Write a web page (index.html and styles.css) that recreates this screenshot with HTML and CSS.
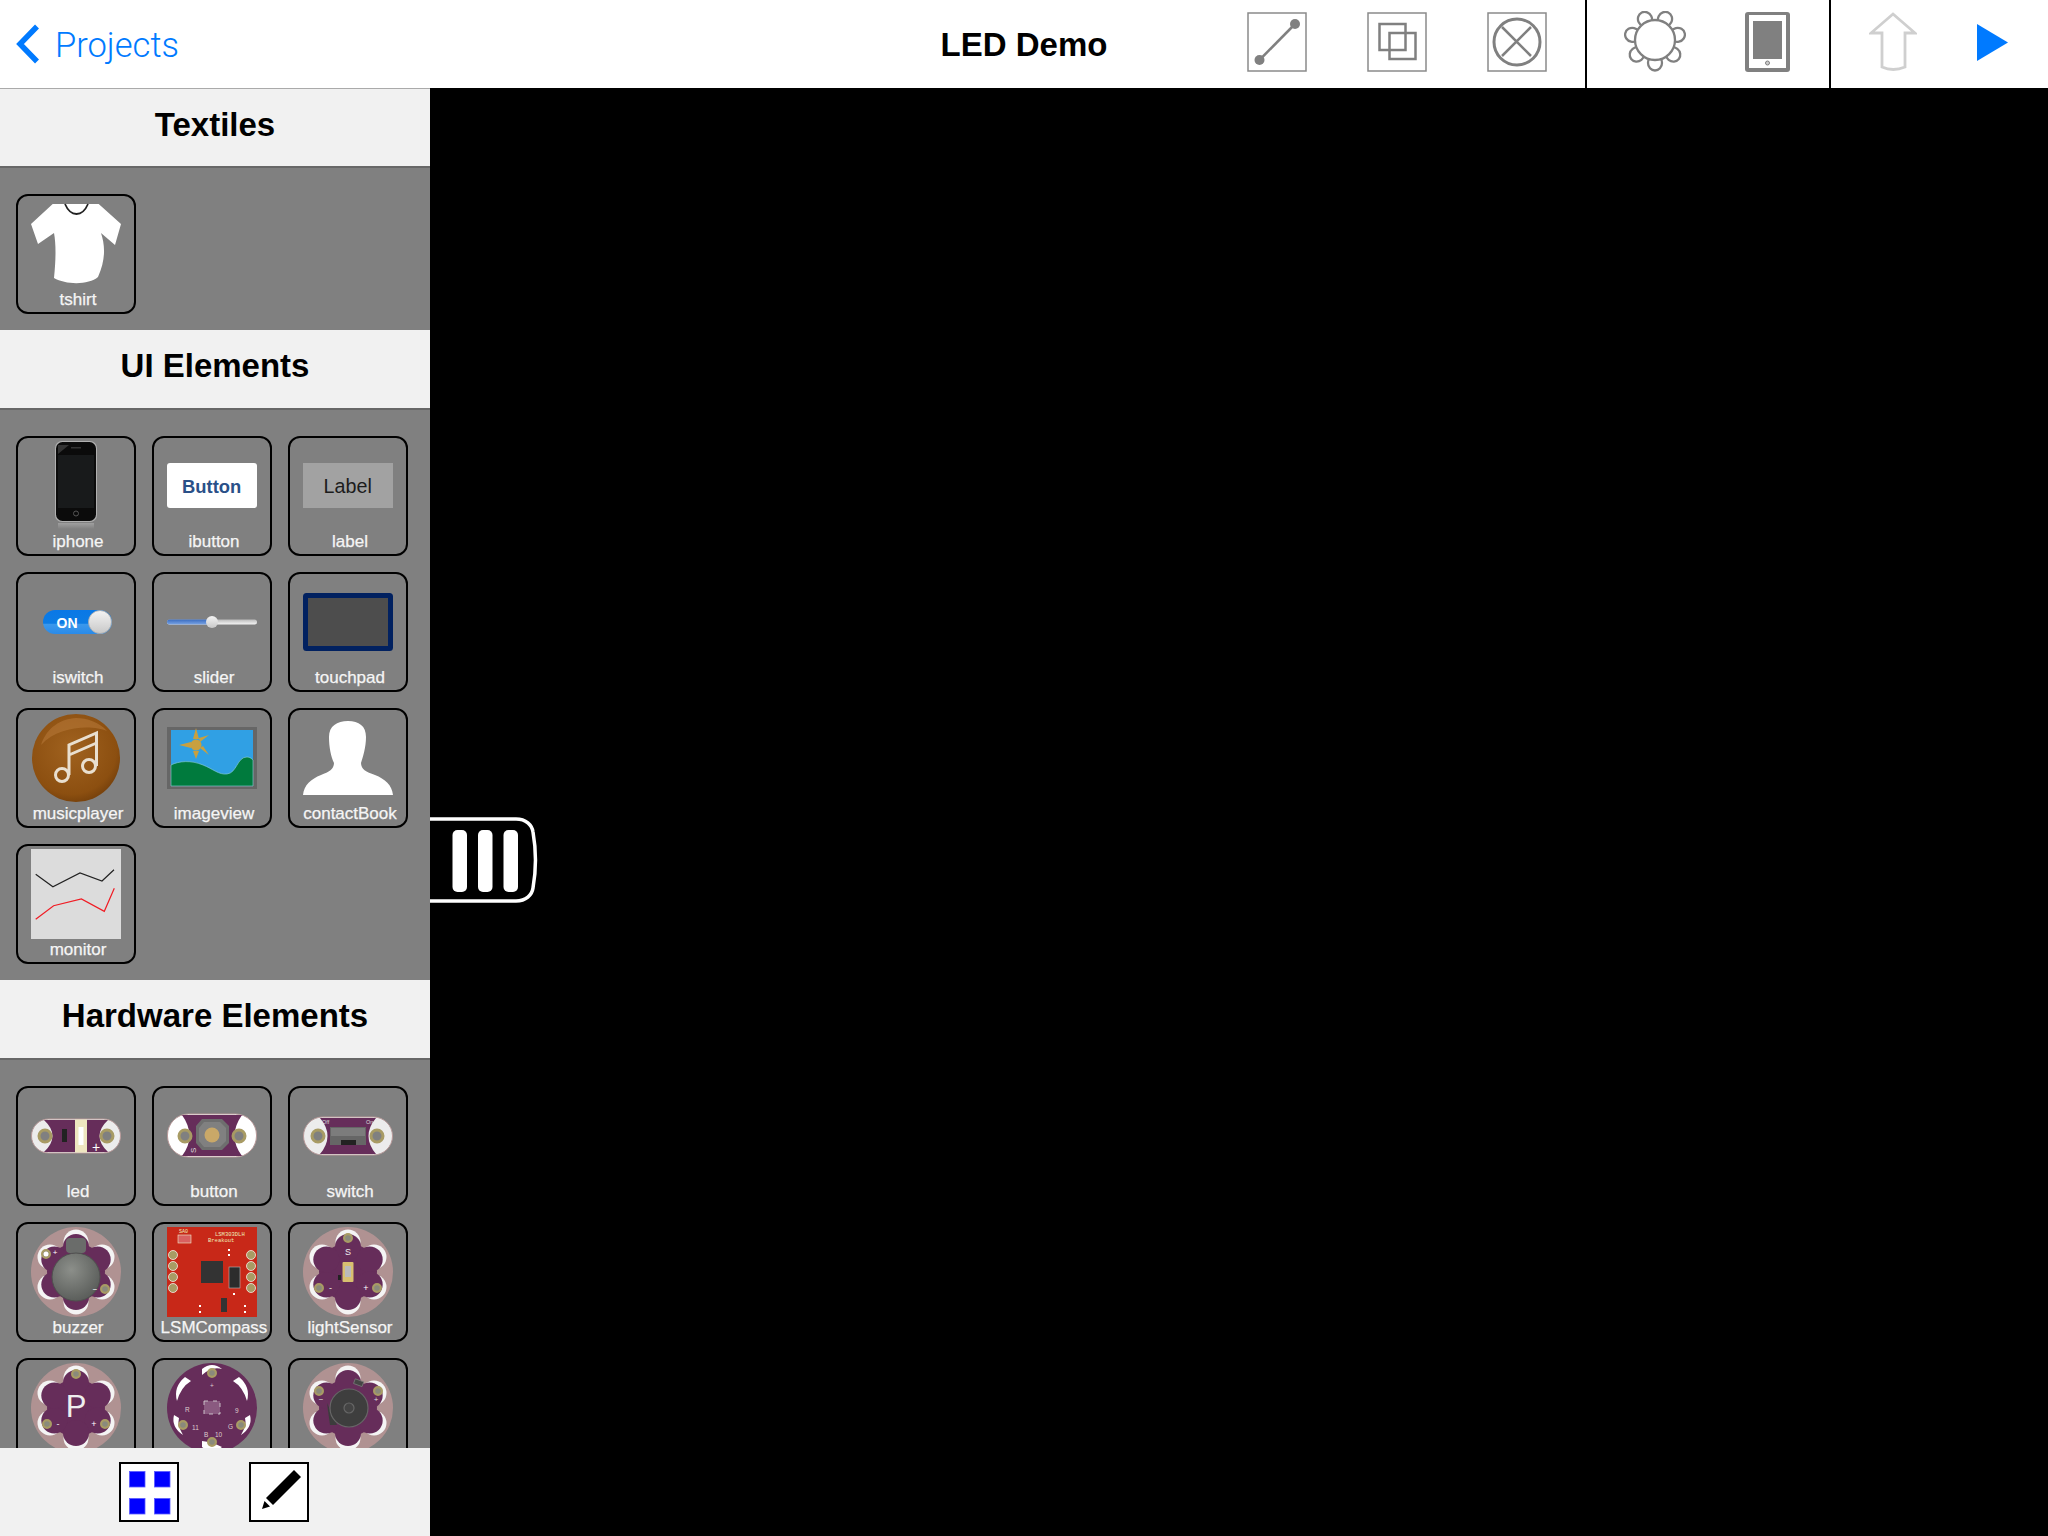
FILE: index.html
```html
<!DOCTYPE html>
<html lang="en">
<head>
<meta charset="utf-8">
<title>LED Demo</title>
<link rel="stylesheet" href="styles.css">
</head>
<body>
<svg class="svg-defs" aria-hidden="true">
  <defs>
    <clipPath id="disk"><circle cx="45" cy="45" r="45"/></clipPath>
    <radialGradient id="brown" cx="45%" cy="40%" r="60%"><stop offset="0" stop-color="#a0621f"/><stop offset="0.85" stop-color="#8c4f10"/><stop offset="1" stop-color="#7a430c"/></radialGradient>
    <radialGradient id="buzz" cx="40%" cy="35%" r="70%"><stop offset="0" stop-color="#8c8f8a"/><stop offset="1" stop-color="#585b58"/></radialGradient>
    <linearGradient id="blue" x1="0" y1="0" x2="0" y2="1"><stop offset="0" stop-color="#0a78e6"/><stop offset="0.55" stop-color="#0c7ce4"/><stop offset="0.6" stop-color="#3a98ec"/><stop offset="1" stop-color="#2a8ae8"/></linearGradient>
    <linearGradient id="knob" x1="0" y1="0" x2="0" y2="1"><stop offset="0" stop-color="#f4f4f4"/><stop offset="1" stop-color="#c8c8c8"/></linearGradient>
    <linearGradient id="track" x1="0" y1="0" x2="0" y2="1"><stop offset="0" stop-color="#3a6cc0"/><stop offset="1" stop-color="#7aa4e4"/></linearGradient>
    <linearGradient id="trackr" x1="0" y1="0" x2="0" y2="1"><stop offset="0" stop-color="#bbbbbb"/><stop offset="1" stop-color="#f4f4f4"/></linearGradient>
    <linearGradient id="fade" x1="0" y1="0" x2="0" y2="1"><stop offset="0" stop-color="#a0a0a0"/><stop offset="1" stop-color="#808080"/></linearGradient>
    <g id="flower">
      <circle cx="45" cy="45" r="45" fill="#b09292"/>
      <g clip-path="url(#disk)" fill="#f4f4f4">
        <circle cx="45" cy="15" r="12.500"/><circle cx="71" cy="30" r="12.500"/><circle cx="71" cy="60" r="12.500"/>
        <circle cx="45" cy="75" r="12.500"/><circle cx="19" cy="60" r="12.500"/><circle cx="19" cy="30" r="12.500"/>
      </g>
      <g fill="#662d5a">
        <circle cx="45" cy="45" r="29"/>
        <circle cx="45" cy="20" r="13"/><circle cx="66.700" cy="32.500" r="13"/><circle cx="66.700" cy="57.500" r="13"/>
        <circle cx="45" cy="70" r="13"/><circle cx="23.300" cy="57.500" r="13"/><circle cx="23.300" cy="32.500" r="13"/>
      </g>
    </g>
    <circle id="pad" r="3.900" fill="#8a8a7c" stroke="#a89b64" stroke-width="2.200"/>
    <circle id="padl" r="6" fill="#808080" stroke="#a89b64" stroke-width="3"/>
  </defs>
</svg>

<div class="app">
  <header class="topbar">
    <a class="back">
      <svg class="chevron" viewBox="0 0 24 40"><path d="M21 2.500 4 20l17 17.500" fill="none" stroke="#007aff" stroke-width="5.500"/></svg>
      <span>Projects</span>
    </a>
    <h1 class="title">LED Demo</h1>
    <div class="tools">
      <div class="group group-edit">
        <svg class="tool-box" viewBox="0 0 60 60"><rect x="1" y="1" width="58" height="58" fill="#fff" stroke="#8a8a8a" stroke-width="1.500"/><path d="M12.500 48 48 12" stroke="#808080" stroke-width="2.500"/><circle cx="48" cy="12" r="5" fill="#808080"/><circle cx="12.500" cy="48" r="5" fill="#808080"/></svg>
        <svg class="tool-box" viewBox="0 0 60 60"><rect x="1" y="1" width="58" height="58" fill="#fff" stroke="#8a8a8a" stroke-width="1.500"/><rect x="12.500" y="12" width="26" height="26" fill="none" stroke="#808080" stroke-width="2.500"/><rect x="22.500" y="21" width="26" height="26" fill="none" stroke="#808080" stroke-width="2.500"/></svg>
        <svg class="tool-box" viewBox="0 0 60 60"><rect x="1" y="1" width="58" height="58" fill="#fff" stroke="#8a8a8a" stroke-width="1.500"/><circle cx="30" cy="30" r="23" fill="none" stroke="#808080" stroke-width="3"/><path d="M15 15 44 44M44 15 15 44" stroke="#808080" stroke-width="2.500"/></svg>
      </div>
      <div class="group group-view">
        <svg class="tool-sun" viewBox="0 0 62 62" fill="#fff" stroke="#808080" stroke-width="2.300">
          <ellipse cx="31" cy="52" rx="7" ry="7.500"/>
          <ellipse cx="31" cy="52" rx="7" ry="7.500" transform="rotate(51.400 31 29)"/>
          <ellipse cx="31" cy="52" rx="7" ry="7.500" transform="rotate(102.900 31 29)"/>
          <ellipse cx="31" cy="52" rx="7" ry="7.500" transform="rotate(154.300 31 29)"/>
          <ellipse cx="31" cy="52" rx="7" ry="7.500" transform="rotate(205.700 31 29)"/>
          <ellipse cx="31" cy="52" rx="7" ry="7.500" transform="rotate(257.100 31 29)"/>
          <ellipse cx="31" cy="52" rx="7" ry="7.500" transform="rotate(308.600 31 29)"/>
          <circle cx="31" cy="29" r="20"/>
        </svg>
        <svg class="tool-device" viewBox="0 0 45 60"><rect width="45" height="60" rx="3" fill="#808080"/><rect x="4" y="3" width="37" height="53" fill="#fff"/><rect x="8" y="9" width="29" height="38" fill="#808080"/><circle cx="22.500" cy="51" r="2" fill="#ccc" stroke="#808080" stroke-width="1"/></svg>
      </div>
      <div class="group group-run">
        <svg class="tool-up" viewBox="0 0 48 60"><path d="M24 2 46 21H36V55Q24 60 13 55V21H2Z" fill="#fff" stroke="#cfcfcf" stroke-width="2.800"/></svg>
        <svg class="tool-play" viewBox="0 0 31 37"><path d="M0 0 31 18.500 0 37Z" fill="#007aff"/></svg>
      </div>
    </div>
  </header>

  <div class="workspace">
    <aside class="sidebar">
      <div class="palette">
        <section>
          <h2 class="section-title">Textiles</h2>
          <div class="tiles">
            <div class="tile">
              <svg class="art" viewBox="0 0 90 90"><path d="M21.700 5H67.700L90 25 84 46 70 34C74 46 75 60 67 78 58 86 35 86 23 79 25 60 25 45 23 34L7 45 0 25Z" fill="#fff"/><path d="M34 5C37 12 41 15 45.500 15 50 15 54 12 57 5" fill="none" stroke="#222" stroke-width="1.800"/></svg>
              <span class="tile-label">tshirt</span>
            </div>
          </div>
        </section>
        <section>
          <h2 class="section-title">UI Elements</h2>
          <div class="tiles">
            <div class="tile">
              <svg class="art" viewBox="0 0 90 90"><rect x="24" y="0" width="42" height="81" rx="7" fill="#b0b0b0"/><rect x="25" y="1" width="40" height="79" rx="6.500" fill="#0b0b0b"/><path d="M27 4 38 4 27 13Z" fill="#333"/><rect x="27" y="14" width="36" height="53" fill="#181a1b"/><rect x="40" y="6" width="10" height="1.500" fill="#333"/><circle cx="45" cy="72.500" r="2.500" fill="none" stroke="#555" stroke-width="1"/><rect x="27" y="82" width="36" height="6" fill="url(#fade)"/></svg>
              <span class="tile-label">iphone</span>
            </div>
            <div class="tile">
              <svg class="art" viewBox="0 0 90 90"><rect x="0" y="22" width="90" height="45" rx="3" fill="#fff"/><text class="art-text art-bold" x="44.700" y="52" font-size="18.400" fill="#2a5088" text-anchor="middle">Button</text></svg>
              <span class="tile-label">ibutton</span>
            </div>
            <div class="tile">
              <svg class="art" viewBox="0 0 90 90"><rect x="0" y="22" width="90" height="45" fill="#a2a2a2"/><text class="art-text" x="44.700" y="52" font-size="19.700" fill="#1c1c1c" text-anchor="middle">Label</text></svg>
              <span class="tile-label">label</span>
            </div>
            <div class="tile">
              <svg class="art" viewBox="0 0 90 90"><rect x="12" y="33" width="69" height="24" rx="12" fill="url(#blue)"/><text class="art-text art-bold" x="36" y="51" font-size="14" fill="#fff" text-anchor="middle">ON</text><circle cx="69" cy="45" r="11.500" fill="url(#knob)" stroke="#aaa" stroke-width="0.800"/></svg>
              <span class="tile-label">iswitch</span>
            </div>
            <div class="tile">
              <svg class="art" viewBox="0 0 90 90"><rect x="0" y="42.500" width="90" height="5" rx="2.500" fill="url(#trackr)"/><rect x="0" y="42.500" width="46" height="5" rx="2.500" fill="url(#track)"/><circle cx="45" cy="45" r="6" fill="url(#knob)"/></svg>
              <span class="tile-label">slider</span>
            </div>
            <div class="tile">
              <svg class="art" viewBox="0 0 90 90"><rect x="2.500" y="18.500" width="85" height="53" rx="1" fill="#4d4d4d" stroke="#012160" stroke-width="5"/></svg>
              <span class="tile-label">touchpad</span>
            </div>
            <div class="tile">
              <svg class="art" viewBox="0 0 90 90"><circle cx="45" cy="45" r="44" fill="url(#brown)"/><path d="M10 32C16 14 30 6 45 5 56 5 68 9 76 18 62 12 28 12 10 32Z" fill="#b87a3a" opacity=".55"/><g fill="none" stroke="#e9dfcf" stroke-width="3"><circle cx="31" cy="62" r="6.500"/><circle cx="58" cy="53" r="6.500"/><path d="M38 62V32L65.500 20V53M38 42 65.500 30"/></g></svg>
              <span class="tile-label">musicplayer</span>
            </div>
            <div class="tile">
              <svg class="art" viewBox="0 0 90 90"><rect x="0" y="14" width="90" height="62" fill="#666"/><rect x="4" y="17" width="82" height="56" fill="#30a0e4"/><path d="M4 52C12 48 24 47 36 52 46 56 52 62 60 61 70 60 70 44 80 44 83 44 85 46 86 47V73H4Z" fill="#007a3d" stroke="#8fd0e0" stroke-width="0.600"/><g fill="#c8a040"><circle cx="29" cy="32" r="5.500"/><path d="M12 32 24 29 24 35ZM29 15 32 26 26 26ZM29 46 26 38 32 38ZM42 22 33 29 32 25ZM42 42 33 35 36 33Z"/></g></svg>
              <span class="tile-label">imageview</span>
            </div>
            <div class="tile">
              <svg class="art" viewBox="0 0 90 90"><path d="M0 82C1 72 8 66 18 62 26 59 31 56 31 50 28 44 26 34 26 24 26 13 34 8 45 8 56 8 63 13 63 24 63 34 60 44 58 50 58 56 63 59 72 62 82 66 89 72 90 82Z" fill="#fff"/></svg>
              <span class="tile-label">contactBook</span>
            </div>
            <div class="tile">
              <svg class="art" viewBox="0 0 90 90"><rect width="90" height="90" fill="#dcdcdc"/><polyline points="4.700,25.300 21.900,37.700 49,24 71,32 83,20.700" fill="none" stroke="#222" stroke-width="1.200"/><polyline points="4.700,70.300 22.600,56.700 50.400,50 73.300,62.300 83.300,39.300" fill="none" stroke="#f01c24" stroke-width="1.200"/></svg>
              <span class="tile-label">monitor</span>
            </div>
          </div>
        </section>
        <section>
          <h2 class="section-title">Hardware Elements</h2>
          <div class="tiles">
            <div class="tile">
              <svg class="art" viewBox="0 0 90 90"><rect x="0.500" y="28" width="89" height="34" rx="17" fill="#ececec" stroke="#b89a9a"/><path d="M13 29H77Q60 45 77 61H13Q30 45 13 29Z" fill="#662d5a"/><rect x="44" y="28.500" width="12" height="33" fill="#efe6c0"/><rect x="47.500" y="36" width="5" height="18" fill="#fff"/><rect x="31" y="38" width="5" height="13" fill="#222"/><text class="art-text" x="65" y="61" font-size="14" fill="#fff" text-anchor="middle">+</text><use href="#padl" x="14" y="45"/><use href="#padl" x="76" y="45"/></svg>
              <span class="tile-label">led</span>
            </div>
            <div class="tile">
              <svg class="art" viewBox="0 0 90 90"><rect x="0.500" y="23" width="89" height="43" rx="21" fill="#fff" stroke="#b89a9a"/><path d="M15 24H75Q60 45 75 65H15Q30 45 15 24Z" fill="#662d5a"/><path d="M35 28H55L62 35V52L55 59H35L29 52V35Z" fill="#6e6e6e"/><path d="M37 31H53L59 37V50L53 56H37L32 50V37Z" fill="#808080"/><circle cx="45" cy="44" r="7.500" fill="#c9a868"/><use href="#padl" x="18" y="45"/><use href="#padl" x="72" y="45"/><text class="art-text" transform="translate(29 62) rotate(-90)" font-size="8" fill="#ddd">S</text></svg>
              <span class="tile-label">button</span>
            </div>
            <div class="tile">
              <svg class="art" viewBox="0 0 90 90"><rect x="0.500" y="26" width="89" height="38" rx="19" fill="#ececec" stroke="#b89a9a"/><path d="M17 27H73Q58 45 73 63H17Q32 45 17 27Z" fill="#662d5a"/><rect x="27" y="36" width="36" height="18" fill="#666"/><rect x="28" y="37" width="34" height="8" fill="#7c7c7c"/><rect x="38" y="49" width="15" height="5" fill="#222"/><text class="art-text" x="19" y="33" font-size="5.500" fill="#ddd">Off</text><text class="art-text" x="63" y="33" font-size="5.500" fill="#ddd">On</text><use href="#padl" x="15" y="45"/><use href="#padl" x="74" y="45"/></svg>
              <span class="tile-label">switch</span>
            </div>
            <div class="tile">
              <svg class="art" viewBox="0 0 90 90"><use href="#flower"/><rect x="35" y="11" width="20" height="15" rx="4" fill="#6a6c6a"/><circle cx="45" cy="50" r="24" fill="url(#buzz)" stroke="#4e514e"/><use href="#pad" x="15" y="27"/><circle cx="15" cy="27" r="2.500" fill="#fff"/><use href="#pad" x="74" y="62"/><text class="art-text" x="24" y="28" font-size="8" fill="#fff" text-anchor="middle">+</text><text class="art-text" x="64" y="65" font-size="8" fill="#fff" text-anchor="middle">−</text></svg>
              <span class="tile-label">buzzer</span>
            </div>
            <div class="tile">
              <svg class="art" viewBox="0 0 90 90"><rect width="90" height="90" fill="#c82818"/><g class="art-mono" font-size="5.500" fill="#eeb"><text x="48" y="9">LSM303DLH</text><text x="41" y="15">Breakout</text><text x="12" y="6" font-size="5">SA0</text></g><rect x="11" y="8" width="13" height="8" fill="#d96060" stroke="#eec" stroke-width="0.600"/><g fill="#a89b64" stroke="#fff" stroke-width="0.700"><circle cx="6" cy="28" r="4.500"/><circle cx="6" cy="39" r="4.500"/><circle cx="6" cy="50" r="4.500"/><circle cx="6" cy="61" r="4.500"/><circle cx="84" cy="28" r="4.500"/><circle cx="84" cy="39" r="4.500"/><circle cx="84" cy="50" r="4.500"/><circle cx="84" cy="61" r="4.500"/></g><rect x="34" y="34" width="22" height="22" fill="#333"/><rect x="62" y="40" width="11" height="21" fill="#2c2c2c" stroke="#bbb" stroke-width="0.600"/><rect x="54" y="71" width="6" height="14" fill="#333"/><g fill="#fff"><rect x="61" y="22" width="2" height="2"/><rect x="61" y="27" width="2" height="2"/><rect x="66" y="66" width="2" height="2"/><rect x="32" y="78" width="2" height="2"/><rect x="32" y="84" width="2" height="2"/><rect x="77" y="78" width="2" height="2"/><rect x="77" y="84" width="2" height="2"/></g></svg>
              <span class="tile-label">LSMCompass</span>
            </div>
            <div class="tile">
              <svg class="art" viewBox="0 0 90 90"><use href="#flower"/><use href="#pad" x="45" y="11"/><use href="#pad" x="16" y="61"/><use href="#pad" x="74" y="61"/><rect x="39.500" y="35" width="11" height="20" rx="1" fill="#d8c070"/><rect x="42" y="39" width="6" height="11" fill="#bbb"/><rect x="35" y="48" width="3" height="5" fill="#222"/><text class="art-text" x="45" y="28" font-size="9" fill="#eee" text-anchor="middle">S</text><text class="art-text" x="27.500" y="64" font-size="9" fill="#eee" text-anchor="middle">-</text><text class="art-text" x="63" y="64" font-size="9" fill="#fff" text-anchor="middle">+</text></svg>
              <span class="tile-label">lightSensor</span>
            </div>
            <div class="tile">
              <svg class="art" viewBox="0 0 90 90"><use href="#flower"/><use href="#pad" x="45" y="11"/><use href="#pad" x="16" y="61"/><use href="#pad" x="74" y="61"/><text class="art-text" x="45" y="54" font-size="31" fill="#eee" text-anchor="middle">P</text><text class="art-text" x="27" y="64" font-size="9" fill="#eee" text-anchor="middle">-</text><text class="art-text" x="63" y="64" font-size="9" fill="#fff" text-anchor="middle">+</text></svg>
            </div>
            <div class="tile">
              <svg class="art" viewBox="0 0 90 90"><circle cx="45" cy="45" r="45" fill="#662d5a"/><g fill="#fff"><path d="M35 6Q45 -2 55 6 45 3 35 12Z"/><path d="M72 14Q84 24 80 38 76 24 66 18Z"/><path d="M18 14Q6 24 10 38 14 24 24 18Z"/><path d="M7 52Q4 64 16 72 10 62 12 55Z"/><path d="M83 52Q86 64 74 72 80 62 78 55Z"/><path d="M35 84Q45 92 55 84 45 79 35 78Z"/></g><use href="#pad" x="45" y="10"/><use href="#pad" x="16" y="62"/><use href="#pad" x="74" y="62"/><use href="#pad" x="45" y="79"/><rect x="37" y="38" width="16" height="13" fill="#8a5a80" stroke="#ddd" stroke-width="0.800" stroke-dasharray="4 5"/><g class="art-text" font-size="6.500" fill="#dcc"><text x="45" y="25" text-anchor="middle">+</text><text x="18" y="49">R</text><text x="25" y="67">11</text><text x="37" y="74">B</text><text x="48" y="74">10</text><text x="61" y="66">G</text><text x="68" y="50">9</text></g></svg>
            </div>
            <div class="tile">
              <svg class="art" viewBox="0 0 90 90"><use href="#flower"/><use href="#pad" x="16" y="28"/><use href="#pad" x="75" y="28"/><rect x="51" y="17" width="9" height="5" fill="#444" stroke="#777" stroke-width="0.800" transform="rotate(20 55 20)"/><path d="M24 40 34 62 27 62Z" fill="#3c3c3c"/><circle cx="46" cy="45" r="19" fill="#3e3e3e" stroke="#666" stroke-width="1.200"/><circle cx="46" cy="45" r="5" fill="#444" stroke="#666" stroke-width="1.200"/><text class="art-text" x="18" y="39" font-size="8" fill="#ddd" text-anchor="middle">−</text><text class="art-text" x="73" y="39" font-size="8" fill="#ddd" text-anchor="middle">+</text></svg>
            </div>
          </div>
        </section>
      </div>
      <footer class="sidebar-foot">
        <button class="foot-btn">
          <svg class="foot-icon" viewBox="0 0 56 56"><g fill="#0000ff" stroke="#5a5aff" stroke-width="0.800"><rect x="8.500" y="7.500" width="15.500" height="15.500"/><rect x="33.500" y="7.500" width="15.500" height="15.500"/><rect x="8.500" y="34.500" width="15.500" height="15.500"/><rect x="33.500" y="34.500" width="15.500" height="15.500"/></g></svg>
        </button>
        <button class="foot-btn">
          <svg class="foot-icon" viewBox="0 0 56 56"><path d="M43 6 50 13 22 41 15 34Z" fill="#000"/><path d="M11 45 13.500 37 19 42.500Z" fill="#000"/></svg>
        </button>
      </footer>
    </aside>
    <main class="canvas">
      <div class="handle">
        <svg class="handle-art" viewBox="0 0 108 86"><path d="M0 2H86C96 2 102 8 103 15 106 32 106 54 103 71 102 78 96 84 86 84H0" fill="#000" stroke="#fff" stroke-width="3.500"/><rect x="22.500" y="13" width="14.500" height="62" rx="5" fill="#fff"/><rect x="48" y="13" width="14.500" height="62" rx="5" fill="#fff"/><rect x="73.500" y="13" width="14.500" height="62" rx="5" fill="#fff"/></svg>
      </div>
    </main>
  </div>
</div>
</body>
</html>
```

FILE: styles.css
```css
* { box-sizing: border-box; }
html, body { margin: 0; height: 100%; }
body { font-family: "Liberation Sans", Arial, sans-serif; background: #000; color: #000; overflow: hidden; }
.svg-defs { display: block; width: 0; height: 0; }
.app { display: flex; flex-direction: column; width: 2048px; height: 1536px; }

.topbar { display: grid; grid-template-columns: 1fr auto 1fr; align-items: center; height: 88px; flex: none; background: #fff; }
.back { display: flex; align-items: center; gap: 15px; padding-left: 16px; color: #007aff; font-family: "Roboto", "Liberation Sans", sans-serif; font-weight: 300; font-size: 34.500px; line-height: 40px; }
.back span { padding-top: 2px; }
.chevron { width: 24px; height: 40px; flex: none; }
.title { margin: 0; font-size: 33px; font-weight: 700; line-height: 90px; height: 88px; }
.tools { display: flex; justify-content: flex-end; align-self: stretch; }
.group { display: flex; align-items: center; padding-bottom: 4px; }
.group-edit { gap: 60px; margin-right: 38px; }
.group-view { border-left: 2px solid #000; padding-left: 37px; padding-right: 39px; gap: 59px; }
.group-run { border-left: 2px solid #000; padding-left: 38px; padding-right: 40px; gap: 60px; }
.tool-box { width: 60px; height: 60px; display: block; }
.tool-sun { width: 62px; height: 62px; display: block; }
.tool-device { width: 45px; height: 60px; display: block; }
.tool-up { width: 48px; height: 60px; display: block; }
.tool-play { width: 31px; height: 37px; display: block; }

.workspace { display: flex; flex: 1; min-height: 0; }
.sidebar { width: 430px; flex: none; display: flex; flex-direction: column; background: #808080; border-top: 1px solid #aaa; }
.palette { flex: 1; min-height: 0; overflow: hidden; }
.section-title { margin: 0; height: 80px; background: #f1f1f1; border-bottom: 2px solid #686868; text-align: center; font-size: 33px; font-weight: 700; line-height: 72px; }
section:first-child .section-title { height: 79px; }
.tiles { display: grid; grid-template-columns: repeat(3, 120px); grid-auto-rows: 120px; gap: 16px; padding: 26px 0 16px 16px; }
.tile { display: flex; flex-direction: column; align-items: center; border: 2px solid #000; border-radius: 12px; padding-top: 3px; color: #f5f5f5; }
.art { width: 90px; height: 90px; flex: none; display: block; overflow: hidden; }
.tile-label { height: 20px; margin-top: 1px; line-height: 20px; font-size: 17px; white-space: nowrap; padding-left: 4px; -webkit-text-stroke: 0.25px #f5f5f5; }
.art-text { font-family: "Liberation Sans", Arial, sans-serif; }
.art-bold { font-weight: 700; }
.art-mono { font-family: "Liberation Mono", monospace; }

.sidebar-foot { height: 88px; flex: none; display: flex; justify-content: flex-start; gap: 70px; padding: 14px 0 0 119px; background: #f1f1f1; }
.foot-btn { width: 60px; height: 60px; padding: 0; background: #fff; border: 2px solid #000; display: block; }
.foot-icon { width: 56px; height: 56px; display: block; }

.canvas { flex: 1; position: relative; background: #000; }
.handle { position: absolute; left: 0; top: 729px; width: 108px; height: 86px; }
.handle-art { width: 108px; height: 86px; display: block; }
```
